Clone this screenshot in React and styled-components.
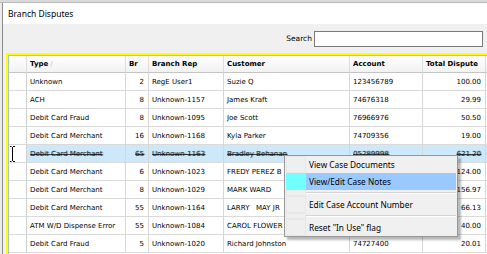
import React from 'react';
import styled, { createGlobalStyle, css } from 'styled-components';

const GlobalStyle = createGlobalStyle`
  html, body {
    margin: 0;
    padding: 0;
    background: #e9e9e9;
  }
  body {
    font-family: "DejaVu Sans", sans-serif;
  }
`;

const COLS = '18px 99px 23px 75px 126px 73px 63px 1fr';

// account numbers under the context menu are not visible in the shot
const rows = [
  ['Unknown', '2', 'RegE User1', 'Suzie Q', '123456789', '100.00'],
  ['ACH', '8', 'Unknown-1157', 'James Kraft', '74676318', '29.99'],
  ['Debit Card Fraud', '8', 'Unknown-1095', 'Joe Scott', '76966976', '50.50'],
  ['Debit Card Merchant', '16', 'Unknown-1168', 'Kyla Parker', '74709356', '19.00'],
  ['Debit Card Merchant', '65', 'Unknown-1163', 'Bradley Behanan', '05289998', '621.20', true],
  ['Debit Card Merchant', '6', 'Unknown-1023', 'FREDY PEREZ B', '', '124.00'],
  ['Debit Card Merchant', '8', 'Unknown-1029', 'MARK WARD', '', '156.97'],
  ['Debit Card Merchant', '55', 'Unknown-1164', 'LARRY   MAY JR', '', '66.13'],
  ['ATM W/D Dispense Error', '55', 'Unknown-1084', 'CAROL FLOWER', '', '40.00'],
  ['Debit Card Fraud', '5', 'Unknown-1020', 'Richard Johnston', '74727400', '20.01'],
];

const Screen = styled.div`
  position: relative;
  width: 487px;
  height: 254px;
  overflow: hidden;
  display: flex;
  flex-direction: column;
  background: #e9e9e9;
`;

const BehindStrip = styled.div`
  flex: none;
  height: 3px;
  background: #dadada;
  border-bottom: 1px solid #b9b9b9;
  box-sizing: border-box;
`;

const Desk = styled.div`
  flex: 1;
  display: flex;
  min-height: 0;
`;

const LeftStrip = styled.div`
  flex: none;
  width: 2px;
  background: #ececec;
`;

const Window = styled.div`
  flex: 1;
  min-width: 0;
  display: flex;
  flex-direction: column;
  border-left: 1px solid #8c8c8c;
  background: #f0f0f0;
`;

const TitleBar = styled.div`
  flex: none;
  height: 21px;
  display: flex;
  align-items: center;
  padding-left: 5px;
  background: #ffffff;
  font-family: "Noto Sans", sans-serif;
  font-size: 8.5px;
  color: #000;
`;

const SearchBar = styled.div`
  flex: none;
  height: 29px;
  display: flex;
  align-items: center;
  justify-content: flex-end;
  gap: 2px;
  padding-right: 4px;
`;

const SearchLabel = styled.label`
  font-size: 7.5px;
  color: #000;
`;

const SearchInput = styled.input`
  box-sizing: border-box;
  width: 169px;
  height: 16px;
  margin: 0;
  padding: 0 2px;
  border: 1px solid #7a7a7a;
  background: #fff;
  outline: none;
`;

const GridFrame = styled.div`
  flex: 1;
  min-height: 0;
  margin-left: 3px;
  border-left: 2px solid #ffff00;
  border-top: 2px solid #ffff00;
  overflow: hidden;
`;

const Grid = styled.div`
  border-left: 1px solid #a9c0d8;
  border-top: 1px solid #a9c0d8;
  height: 100%;
  background: #fff;
`;

const Row = styled.div`
  display: grid;
  grid-template-columns: ${COLS};
  height: ${(p) => (p.$header ? 17 : 18)}px;
`;

const Cell = styled.div`
  box-sizing: border-box;
  display: flex;
  align-items: center;
  justify-content: ${(p) => (p.$right ? 'flex-end' : 'flex-start')};
  padding: 0 ${(p) => (p.$right ? 4 : 3)}px 0 3px;
  border-right: 1px solid #d6d6d6;
  border-bottom: 1px solid #dadada;
  font-size: 7px;
  color: #000;
  white-space: pre;
  overflow: hidden;
  background: ${(p) => (p.$selected ? '#cde8f8' : '#fff')};
  ${(p) =>
    p.$garbled &&
    css`
      color: #222;
      text-decoration: line-through;
      text-decoration-thickness: 1px;
      text-decoration-color: rgba(0, 0, 0, 0.6);
      text-shadow: 1px 0 0 rgba(0, 0, 0, 0.3);
    `}
`;

const HeadCell = styled(Cell)`
  font-weight: bold;
  background: linear-gradient(#ffffff, #f2f2f2);
  border-right: 1px solid #dddddd;
  border-bottom: 1px solid #c4c4c4;
`;

const RowMark = styled(Cell)`
  padding: 0 0 0 1px;
  background: #fff;
  border-right: 1px solid #cfcfcf;
`;

const SortGlyph = styled.span`
  color: #c4c4c4;
  font-weight: normal;
  margin-left: 2px;
`;

const Menu = styled.div`
  position: absolute;
  left: 284px;
  top: 155px;
  width: 174px;
  box-sizing: border-box;
  border: 1px solid #979797;
  background: #f0f0f0;
  box-shadow: 3px 3px 2px rgba(0, 0, 0, 0.28);
  font-family: "Noto Sans", sans-serif;
  font-size: 8.3px;
  color: #000;
`;

const MenuItem = styled.div`
  display: flex;
  height: 17px;
  margin: 0 1px;
`;

const Gutter = styled.div`
  flex: none;
  width: 20px;
  box-sizing: border-box;
  border: 1px solid ${(p) => (p.$active ? '#73ffff' : '#e8e8e8')};
  background: ${(p) => (p.$active ? '#73ffff' : '#efefef')};
`;

const MenuLabel = styled.div`
  flex: 1;
  display: flex;
  align-items: center;
  padding-left: 3px;
  background: ${(p) => (p.$active ? '#99c9ff' : 'transparent')};
`;

const Separator = styled.div`
  display: flex;
  height: 6px;
  margin: 0 1px;
`;

const SepLine = styled.div`
  flex: 1;
  align-self: center;
  height: 1px;
  background: #d3d3d3;
  border-bottom: 1px solid #ffffff;
`;

const IBeam = () => (
  <svg width="5" height="16" viewBox="0 0 5 16">
    <path d="M0 0.5h1.5M3 0.5h2M2.5 1v14M0 15.5h1.5M3 15.5h2" stroke="#000" strokeWidth="1" fill="none" />
  </svg>
);

const menuItems = [
  { label: 'View Case Documents' },
  { label: 'View/Edit Case Notes', active: true },
  { sep: true },
  { label: 'Edit Case Account Number' },
  { sep: true },
  { label: 'Reset "In Use" flag' },
];

export default function App() {
  return (
    <>
      <GlobalStyle />
      <Screen>
        <BehindStrip />
        <Desk>
          <LeftStrip />
          <Window>
            <TitleBar>Branch Disputes</TitleBar>
            <SearchBar>
              <SearchLabel>Search</SearchLabel>
              <SearchInput readOnly />
            </SearchBar>
            <GridFrame>
              <Grid>
                <Row $header>
                  <HeadCell />
                  <HeadCell>
                    Type<SortGlyph>/</SortGlyph>
                  </HeadCell>
                  <HeadCell>Br</HeadCell>
                  <HeadCell>Branch Rep</HeadCell>
                  <HeadCell>Customer</HeadCell>
                  <HeadCell>Account</HeadCell>
                  <HeadCell>Total Dispute</HeadCell>
                  <HeadCell />
                </Row>
                {rows.map((r, i) => {
                  const sel = !!r[6];
                  return (
                    <Row key={i}>
                      <RowMark>{sel && <IBeam />}</RowMark>
                      <Cell $selected={sel} $garbled={sel}>{r[0]}</Cell>
                      <Cell $selected={sel} $garbled={sel} $right>{r[1]}</Cell>
                      <Cell $selected={sel} $garbled={sel}>{r[2]}</Cell>
                      <Cell $selected={sel} $garbled={sel}>{r[3]}</Cell>
                      <Cell $selected={sel} $garbled={sel}>{r[4]}</Cell>
                      <Cell $selected={sel} $garbled={sel} $right>{r[5]}</Cell>
                      <Cell $selected={sel} />
                    </Row>
                  );
                })}
              </Grid>
            </GridFrame>
          </Window>
        </Desk>
        <Menu>
          {menuItems.map((m, i) =>
            m.sep ? (
              <Separator key={i}>
                <Gutter />
                <SepLine />
              </Separator>
            ) : (
              <MenuItem key={i}>
                <Gutter $active={m.active} />
                <MenuLabel $active={m.active}>{m.label}</MenuLabel>
              </MenuItem>
            )
          )}
        </Menu>
      </Screen>
    </>
  );
}
